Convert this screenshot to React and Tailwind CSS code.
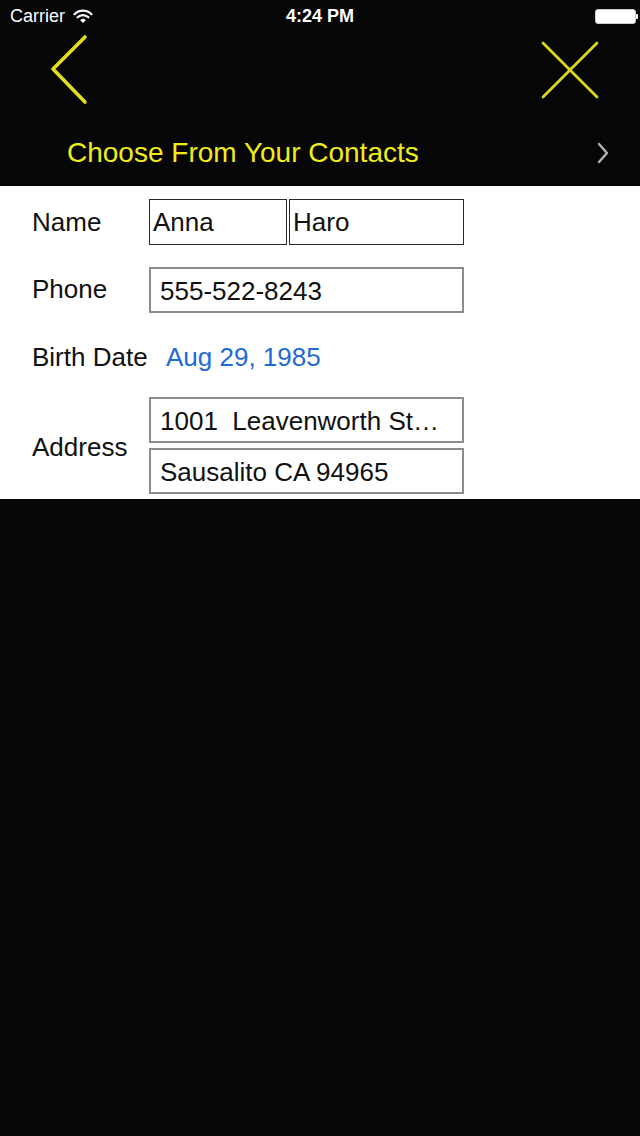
import React from "react";

const font = { fontFamily: '"Liberation Sans", Arial, sans-serif' };

function Wifi() {
  return (
    <svg width="20" height="15" viewBox="0 0 20 15" className="ml-[8px]">
      <path d="M1.5 5.2 A12 12 0 0 1 18.5 5.2" stroke="white" strokeWidth="2.2" fill="none" strokeLinecap="round" />
      <path d="M4.6 8.3 A7.6 7.6 0 0 1 15.4 8.3" stroke="white" strokeWidth="2.2" fill="none" strokeLinecap="round" />
      <path d="M10 14 L7.2 11.2 A4 4 0 0 1 12.8 11.2 Z" fill="white" />
    </svg>
  );
}

function Battery() {
  return (
    <div className="flex items-center">
      <div className="w-[41px] h-[15px] rounded-[3px] bg-white border border-[#cfcfcf]" />
      <div className="w-[2px] h-[5px] bg-white rounded-r-[1px]" />
    </div>
  );
}

export default function App() {
  return (
    <div className="min-h-screen w-[640px] bg-[#060606]" style={font}>
      <div className="h-[186px] flex flex-col bg-[#060606]">
        <div className="h-[32px] flex items-center relative">
          <div className="flex items-center pl-[10px]">
            <span className="text-white text-[18px] leading-none">Carrier</span>
            <Wifi />
          </div>
          <div className="flex-1 flex justify-center">
            <span className="text-white text-[18px] font-semibold leading-none ml-[-48px]">4:24 PM</span>
          </div>
          <div className="pr-[2px]">
            <Battery />
          </div>
        </div>
        <div className="h-[88px] flex items-start justify-between">
          <svg width="44" height="72" viewBox="0 0 44 72" className="ml-[48px] mt-[2px]">
            <polyline points="37,3 5,35 37,68" fill="none" stroke="#e4df18" strokeWidth="3.6" strokeLinecap="round" strokeLinejoin="round" />
          </svg>
          <svg width="60" height="60" viewBox="0 0 60 60" className="mr-[40px] mt-[8px]">
            <line x1="3" y1="3" x2="57" y2="57" stroke="#dcd81a" strokeWidth="2.8" strokeLinecap="round" />
            <line x1="57" y1="3" x2="3" y2="57" stroke="#dcd81a" strokeWidth="2.8" strokeLinecap="round" />
          </svg>
        </div>
        <div className="h-[66px] flex items-center justify-between">
          <span className="pl-[67px] text-[28px] leading-none text-[#f0ec1c]">Choose From Your Contacts</span>
          <svg width="14" height="22" viewBox="0 0 14 22" className="mr-[30px]">
            <polyline points="3,2 11,11 3,20" fill="none" stroke="#b0b0b0" strokeWidth="2.5" strokeLinecap="round" strokeLinejoin="round" />
          </svg>
        </div>
      </div>

      <div className="bg-white flex flex-col pt-[13px] pb-[5px] text-[26px] text-[#111] leading-none">
        <div className="flex items-center h-[46px] pl-[32px]">
          <span className="w-[117px]">Name</span>
          <div className="flex gap-[2px]">
            <div className="w-[138px] h-[46px] border border-[#2a2a2a] flex items-center pl-[3px]">Anna</div>
            <div className="w-[175px] h-[46px] border border-[#2a2a2a] flex items-center pl-[3px]">Haro</div>
          </div>
        </div>

        <div className="flex items-center h-[46px] pl-[32px] mt-[22px]">
          <span className="w-[117px] mt-[-2px]">Phone</span>
          <div className="w-[315px] h-[46px] border-2 border-[#8c8c8c] flex items-center pl-[9px] pt-[2px]">555-522-8243</div>
        </div>

        <div className="flex items-center h-[84px] pl-[32px] pt-[4px]">
          <span className="w-[134px]">Birth Date</span>
          <span className="text-[#1f6ad6]">Aug 29, 1985</span>
        </div>

        <div className="flex items-center pl-[32px]">
          <span className="w-[117px] pt-[2px]">Address</span>
          <div className="flex flex-col gap-[5px]">
            <div className="w-[315px] h-[46px] border-2 border-[#8c8c8c] flex items-center pl-[9px] pt-[2px]">1001&nbsp; Leavenworth St…</div>
            <div className="w-[315px] h-[46px] border-2 border-[#8c8c8c] flex items-center pl-[9px] pt-[2px]">Sausalito CA 94965</div>
          </div>
        </div>
      </div>
    </div>
  );
}
